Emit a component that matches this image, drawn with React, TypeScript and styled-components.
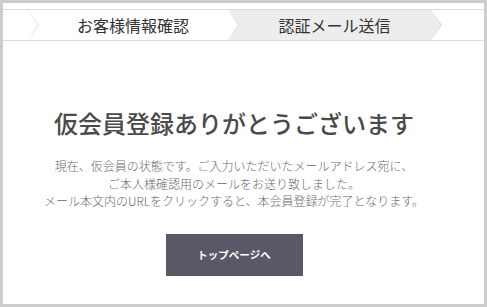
import React from 'react';
import styled, { createGlobalStyle } from 'styled-components';

const GlobalStyle = createGlobalStyle`
  html, body {
    margin: 0;
    padding: 0;
    background: #fff;
  }
  body {
    font-family: 'Noto Sans CJK JP', 'Noto Sans', sans-serif;
  }
`;

const Frame = styled.div`
  box-sizing: border-box;
  width: 487px;
  height: 307px;
  border: 3px solid #cdcdcd;
  background: #fff;
  padding-top: 6px;
  overflow: hidden;
`;

const StepBar = styled.ol`
  display: flex;
  margin: 0;
  padding: 0;
  list-style: none;
  height: 30px;
  border-top: 1px solid #dcdcdc;
  border-bottom: 1px solid #dcdcdc;
`;

const Step = styled.li<{ $width: number; $bg: string; $z: number; $arrow?: boolean }>`
  position: relative;
  box-sizing: border-box;
  flex: 0 0 ${(p) => p.$width}px;
  padding-left: 10px;
  background: ${(p) => p.$bg};
  z-index: ${(p) => p.$z};
  display: flex;
  align-items: center;
  justify-content: center;
  font-size: 16px;
  color: #333;
  line-height: 1;

  &::before,
  &::after {
    content: ${(p) => (p.$arrow === false ? 'none' : "''")};
    position: absolute;
    top: 0;
    height: 100%;
    clip-path: polygon(0 0, 100% 50%, 0 100%);
  }

  &::before {
    right: -11px;
    width: 11px;
    background: #d8d8d8;
  }

  &::after {
    right: -10px;
    width: 10px;
    background: ${(p) => p.$bg};
  }
`;

const Rest = styled.li`
  flex: 1;
  background: #fff;
`;

const Content = styled.main`
  display: flex;
  flex-direction: column;
  align-items: center;
  padding: 64px 19px 0 0;
`;

const Title = styled.h1`
  margin: 0;
  font-size: 24px;
  line-height: 36px;
  font-weight: 500;
  color: #4a4a4a;
`;

const Lead = styled.p`
  margin: 16px 0 0;
  font-size: 12px;
  line-height: 17.5px;
  color: #6a6a6a;
  text-align: center;
  font-weight: 300;
`;

const Button = styled.a`
  margin-top: 24px;
  width: 137px;
  height: 42px;
  display: flex;
  align-items: center;
  justify-content: center;
  background: #5a5867;
  color: #fff;
  font-size: 10.5px;
  font-weight: 700;
  text-decoration: none;
`;

export default function App() {
  return (
    <>
      <GlobalStyle />
      <Frame>
        <StepBar>
          <Step $width={25} $bg="#fff" $z={4} />
          <Step $width={200} $bg="#fff" $z={3}>
            お客様情報確認
          </Step>
          <Step $width={203} $bg="#ededed" $z={2}>
            認証メール送信
          </Step>
          <Rest />
        </StepBar>
        <Content>
          <Title>仮会員登録ありがとうございます</Title>
          <Lead>
            現在、仮会員の状態です。ご入力いただいたメールアドレス宛に、
            <br />
            ご本人様確認用のメールをお送り致しました。
            <br />
            メール本文内のURLをクリックすると、本会員登録が完了となります。
          </Lead>
          <Button href="#">トップページへ</Button>
        </Content>
      </Frame>
    </>
  );
}
